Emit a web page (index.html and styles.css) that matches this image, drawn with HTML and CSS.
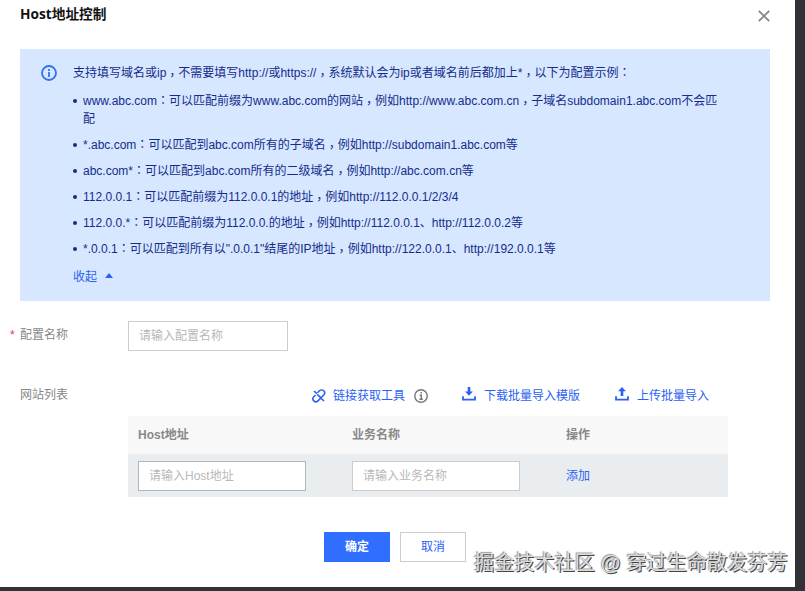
FILE: index.html
```
<!DOCTYPE html>
<html lang="zh-CN">
<head>
<meta charset="utf-8">
<title>Host地址控制</title>
<link rel="stylesheet" href="styles.css">
</head>
<body>
<main class="dialog">
  <header class="head">
    <h1>Host地址控制</h1>
    <svg class="close" viewBox="0 0 12 12"><path d="M.8.8l10.4 10.4M11.2.8L.8 11.2"/></svg>
  </header>
  <section class="notice">
    <svg class="info" viewBox="0 0 16 16"><circle cx="8" cy="8" r="7"/><path d="M8 7v5M8 4v2"/></svg>
    <div class="notice-body">
      <p class="intro">支持填写域名或ip<i lang="zh-TW">，</i>不需要填写http://或https://<i lang="zh-TW">，</i>系统默认会为ip或者域名前后都加上*<i lang="zh-TW">，</i>以下为配置示例<b lang="zh-TW">：</b></p>
      <ul>
        <li>www.abc.com<b lang="zh-TW">：</b>可以匹配前缀为www.abc.com的网站<i lang="zh-TW">，</i>例如http://www.abc.com.cn<i lang="zh-TW">，</i>子域名subdomain1.abc.com不会匹<br>配</li>
        <li>*.abc.com<b lang="zh-TW">：</b>可以匹配到abc.com所有的子域名<i lang="zh-TW">，</i>例如http://subdomain1.abc.com等</li>
        <li>abc.com*<b lang="zh-TW">：</b>可以匹配到abc.com所有的二级域名<i lang="zh-TW">，</i>例如http://abc.com.cn等</li>
        <li>112.0.0.1<b lang="zh-TW">：</b>可以匹配前缀为112.0.0.1的地址<i lang="zh-TW">，</i>例如http://112.0.0.1/2/3/4</li>
        <li>112.0.0.*<b lang="zh-TW">：</b>可以匹配前缀为112.0.0.的地址<i lang="zh-TW">，</i>例如http://112.0.0.1、http://112.0.0.2等</li>
        <li>*.0.0.1<b lang="zh-TW">：</b>可以匹配到所有以".0.0.1"结尾的IP地址<i lang="zh-TW">，</i>例如http://122.0.0.1、http://192.0.0.1等</li>
      </ul>
      <a class="fold">收起<span class="caret"></span></a>
    </div>
  </section>
  <div class="row name-row">
    <label><span class="star">*</span>配置名称</label>
    <input class="name" placeholder="请输入配置名称">
  </div>
  <div class="row list-row">
    <label>网站列表</label>
    <div class="list">
      <div class="tools">
        <a class="tool"><svg class="link" viewBox="0 0 14 14"><path d="M5.5 3.8l2-2a2.9 2.9 0 0 1 4.2 4.2L6 11.9a2.9 2.9 0 0 1-4.2-4.2L3.6 6M2 2.2l3 2.4M5.2 5.4l3.7 3.5M9.3 9.7l2.8 2.3"/></svg>链接获取工具</a>
        <svg class="help" viewBox="0 0 14 14"><circle cx="7" cy="7" r="6.2"/><path d="M5.6 6.2h1.7v4M5.4 10.2h3.4M6.4 3.8h1.5"/></svg>
        <a class="tool down"><svg class="arrow" viewBox="0 0 14 14"><path class="fill" d="M5.7 0h2.6v4.6h2.6L7 8.8 3.1 4.6h2.6z"/><path d="M1 9.3v3.4h12V9.3"/></svg>下载批量导入模版</a>
        <a class="tool up"><svg class="arrow" viewBox="0 0 14 14"><path class="fill" d="M7 0l3.9 4.2H8.3v4.8H5.7V4.2H3.1z"/><path d="M1 9.3v3.4h12V9.3"/></svg>上传批量导入</a>
      </div>
      <div class="table">
        <div class="tr th"><span>Host地址</span><span>业务名称</span><span>操作</span></div>
        <div class="tr td"><span><input class="active" placeholder="请输入Host地址"></span><span><input placeholder="请输入业务名称"></span><span><a>添加</a></span></div>
      </div>
    </div>
  </div>
  <footer><button class="primary">确定</button><button>取消</button></footer>
</main>
<div class="watermark">掘金技术社区 @ 穿过生命散发芬芳</div>
</body>
</html>
```
FILE: styles.css
```
* { box-sizing: border-box; }
body {
  margin: 0; width: 805px; height: 591px; overflow: hidden; background: #323236;
  font: 12px/18px "Liberation Sans", "Noto Sans CJK SC", sans-serif;
}
.dialog { width: 795px; height: 587px; background: #fff; }
.head { height: 49px; padding: 4px 25px 0 20px; display: flex; justify-content: space-between; align-items: flex-start; }
h1 { margin: 0; font: 700 13.7px/20px "Open Sans", "Noto Sans CJK SC", sans-serif; color: #111; }
.close { width: 12px; height: 12px; margin-top: 6px; stroke: #888; stroke-width: 1.8; fill: none; }
.notice { width: 750px; height: 252px; margin-left: 20px; padding: 15px 20px 0 21px; display: flex; background: #d6e7ff; color: #152c8c; }
.info { width: 16px; height: 16px; margin: 1px 16px 0 0; fill: none; stroke: #3570f4; stroke-width: 1.8; }
.notice i, .notice b { font: normal 12px/12px "Noto Sans CJK TC", sans-serif; }
.notice i { position: relative; top: 3px; }
.notice p { margin: 0 0 10px; white-space: nowrap; }
.notice ul { margin: 0; padding: 0; list-style: none; }
.notice li { margin-bottom: 8px; padding-left: 10px; position: relative; white-space: nowrap; }
.notice li::before { content: ""; position: absolute; left: 0; top: 7px; width: 4px; height: 4px; border-radius: 50%; background: #152c8c; }
a { color: #2b61f3; }
.fold { display: flex; align-items: center; margin-top: 10px; }
.caret { margin: -3px 0 0 8px; border: 4px solid transparent; border-top: 0; border-bottom: 5px solid #2b61f3; }
.row { display: flex; color: #888; }
label { width: 118px; margin-left: 10px; flex: none; }
.name-row { height: 64px; padding-top: 20px; }
.name-row label { padding-top: 5px; }
.star { color: #d83b4b; display: inline-block; width: 10px; }
input { display: block; width: 168px; height: 30px; border: 1px solid #ccc; padding: 0 10px; font: inherit; background: #fff; border-radius: 0; outline: 0; }
input::placeholder { color: #b8b8b8; opacity: 1; }
.name { width: 160px; }
.active { border-color: #aeb6be; }
.list-row label { padding: 21px 0 0 10px; }
.list { width: 600px; }
.tools { height: 51px; padding: 11px 0 0 184px; display: flex; align-items: center; }
.tool { display: flex; align-items: center; white-space: nowrap; }
svg { display: block; flex: none; }
.tool svg { width: 14px; height: 14px; stroke: #2b61f3; stroke-width: 1.6; fill: none; margin-right: 7px; }
.tool .arrow { margin-top: -4px; margin-right: 8px; stroke-width: 1.8; }
.tool .fill { fill: #2b61f3; stroke: none; }
.help { width: 14px; height: 14px; margin-left: 9px; fill: none; stroke: #777; stroke-width: 1.4; }
.down { margin-left: 34px; }
.up { margin-left: 35px; }
.tr { display: grid; grid-template-columns: 214px 214px 1fr; align-items: center; padding-left: 10px; }
.th { height: 38px; background: #f8f8f8; color: #888; font-weight: 700; }
.td { height: 43px; background: #e9edf0; }
footer { display: flex; gap: 10px; padding: 35px 0 0 324px; }
button { width: 66px; height: 30px; border: 1px solid #ccc; padding: 0; background: #fff; color: #2b61f3; font: inherit; }
.primary { border-color: #306eff; background: #306eff; color: #fff; font-weight: 700; }
.watermark { position: absolute; left: 474px; top: 549px; font: 20.15px/28px "Liberation Sans", "Noto Sans CJK SC", sans-serif; color: #ddd; text-shadow: 1px 1px 0 #444, -1px -1px 1px #999; white-space: nowrap; }
```
